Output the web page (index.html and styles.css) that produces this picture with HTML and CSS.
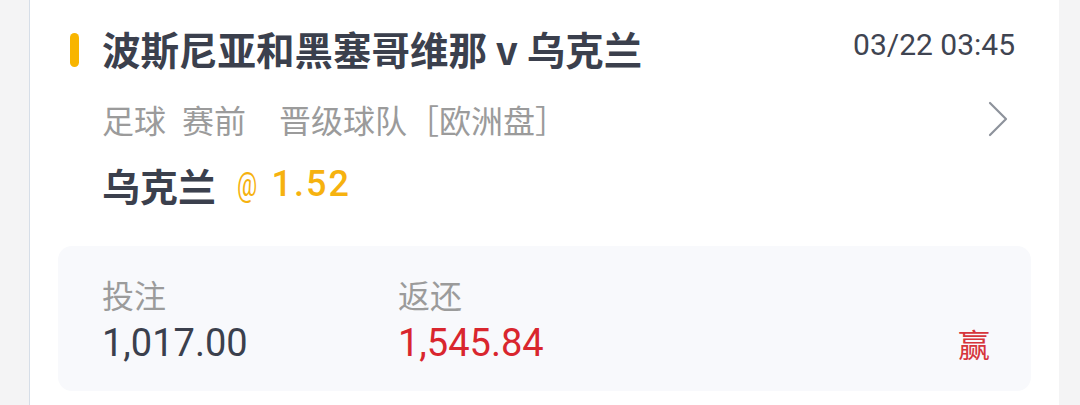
FILE: index.html
```html
<!DOCTYPE html>
<html lang="zh-CN">
<head>
    <meta charset="UTF-8">
    <meta name="viewport" content="width=device-width, initial-scale=1.0">
    <title>注单详情</title>
    <link rel="stylesheet" href="styles.css">
</head>
<body>
    <div class="card">
        <div class="head">
            <span class="mark"></span>
            <h1 class="match">波斯尼亚和黑塞哥维那 v 乌克兰</h1>
            <span class="time">03/22 03:45</span>
        </div>

        <div class="meta">
            <span class="tag">足球</span>
            <span class="tag tag-wide">赛前</span>
            <span class="tag">晋级球队［欧洲盘］</span>
            <svg class="arrow" width="20" height="36" viewBox="0 0 20 36">
                <path d="M2 2 L18 18 L2 34" fill="none" stroke="#8d929b" stroke-width="2.2" stroke-linecap="round" stroke-linejoin="round"/>
            </svg>
        </div>

        <div class="pick">
            <span class="pick-name">乌克兰</span>
            <span class="odds"><span class="at">@</span>1.52</span>
        </div>

        <div class="summary">
            <span class="label">投注</span>
            <span class="label">返还</span>
            <span></span>
            <span class="amount">1,017.00</span>
            <span class="amount amount-win">1,545.84</span>
            <span class="result">赢</span>
        </div>
    </div>
</body>
</html>
```

FILE: styles.css
```css
body {
    margin: 0;
    padding: 0;
    background-color: #f4f4f5;
    font-family: "Noto Sans CJK SC", "Noto Sans", sans-serif;
    overflow: hidden;
}

.card {
    margin-left: 29px;
    width: 1030px;
    height: 420px;
    box-sizing: border-box;
    padding: 22px 28px 0 28px;
    background-color: #fff;
    border-left: 1px solid #d6dee8;
}

.head {
    display: flex;
    align-items: center;
    height: 52px;
}

.mark {
    width: 9px;
    height: 34px;
    margin: 4px 23px 0 12px;
    border-radius: 5px;
    background-color: #f8b500;
}

.match {
    flex: 1;
    margin: 0;
    font-size: 38.5px;
    font-weight: 700;
    line-height: 52px;
    color: #3b404d;
}

.time {
    margin: 0 16px 8px 0;
    font-family: Roboto, sans-serif;
    font-size: 30px;
    color: #3f4451;
}

.meta {
    display: flex;
    align-items: center;
    height: 40px;
    margin-top: 25px;
    padding: 0 23px 0 44px;
    font-size: 32px;
    line-height: 40px;
    color: #9b9b9b;
}

.tag {
    margin-right: 16px;
}

.tag-wide {
    margin-right: 33px;
}

.arrow {
    margin-left: auto;
}

.pick {
    display: flex;
    align-items: center;
    height: 48px;
    margin-top: 21px;
    padding-left: 44px;
}

.pick-name {
    font-size: 38px;
    font-weight: 700;
    color: #3b404d;
}

.odds {
    display: flex;
    align-items: baseline;
    margin-left: 21px;
    font-family: Roboto, sans-serif;
    font-size: 36px;
    font-weight: 500;
    letter-spacing: 2px;
    color: #f6b20f;
}

/* the app font draws a narrow @, squeeze Roboto's to match */
.at {
    display: inline-block;
    margin-right: 2px;
    font-size: 34px;
    font-weight: 400;
    transform: scaleX(0.66);
    transform-origin: left center;
}

.summary {
    display: grid;
    grid-template-columns: 296px 1fr auto;
    grid-template-rows: 40px 46px;
    row-gap: 6px;
    align-items: center;
    height: 145px;
    box-sizing: border-box;
    margin-top: 38px;
    padding: 28px 41px 0 44px;
    border-radius: 14px;
    background-color: #f8f9fc;
}

.label {
    font-size: 32px;
    color: #9b9b9b;
}

.amount {
    font-family: Roboto, sans-serif;
    font-size: 38px;
    color: #3b404d;
}

.amount-win {
    color: #d9262e;
}

.result {
    font-size: 32px;
    color: #d6353b;
}
```
